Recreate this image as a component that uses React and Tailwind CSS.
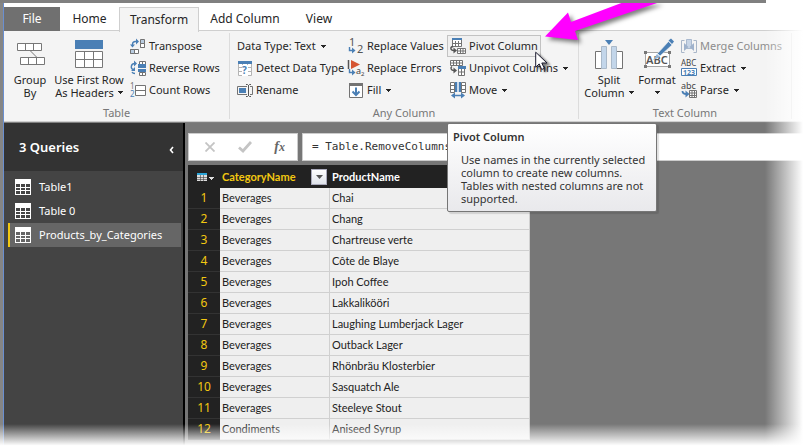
import React from 'react';

const Caret = ({ className = '' }) => (
  <svg aria-hidden="true" viewBox="0 0 5 3" className={`h-[3px] w-[5px] shrink-0 ${className}`} fill="currentColor" shapeRendering="crispEdges">
    <path d="M0 0h5v1H4v1H3v1H2V2H1V1H0z" />
  </svg>
);

const Icon = ({ children, className = 'h-4 w-4', box = '0 0 16 16' }) => (
  <svg aria-hidden="true" viewBox={box} className={`shrink-0 overflow-visible ${className}`} fill="none">
    {children}
  </svg>
);

const LargeIcon = ({ children }) => (
  <Icon className="h-[38px] w-10" box="0 0 40 38">{children}</Icon>
);

const BLUE = '#4a7fb5';
const GREY = '#737373';
const FACE = '"Noto Sans", sans-serif';

const GroupByIcon = () => (
  <LargeIcon>
    <g stroke="#777" fill="#fff">
      <path d="M7.500 8.500h24v7h-24zM15.500 8.500v7M23.500 8.500v7M10.500 22.500h24v7h-24zM18.500 22.500v7M26.500 22.500v7" />
      <path d="M20.500 16l6 6" fill="none" />
    </g>
  </LargeIcon>
);

const HeadersIcon = () => (
  <LargeIcon>
    <path d="M6 5h28v9H6z" fill={BLUE} />
    <path d="M6.500 16.500h27v16h-27zM6.500 24.500h27M15.500 16.500v16M24.500 16.500v16" fill="#fff" stroke="#777" />
  </LargeIcon>
);

const TransposeIcon = () => (
  <Icon>
    <path d="M2.500 8V6.500a3 3 0 0 1 3-3H7" stroke={BLUE} strokeWidth="1.400" />
    <path d="M0 6.500h5L2.500 9.500zM6 .5v6l3-3z" fill={BLUE} />
    <path d="M10.500 1.500h4v8h-4z" fill="#b9cce0" stroke={GREY} />
    <path d="M10.500 5.500h4v4h-4z" fill="#fff" stroke={GREY} />
    <path d="M.5 11.500h8v4h-8z" fill="#fff" stroke={GREY} />
    <path d="M.5 11.500h4v4h-4z" fill="#b9cce0" stroke={GREY} />
  </Icon>
);

const ReverseIcon = () => (
  <Icon>
    <path d="M5 3.500C.5 3.500.5 8.500 3 9.500M2 12c.500 1 1.500 1.500 3 1.500" stroke={BLUE} strokeWidth="1.400" />
    <path d="M4 .5v6l3-3zM1 11l4-4v4z" fill={BLUE} />
    <path d="M9.500 1.500h6v3h-6zM12.500 1.500v3M9.500 12.500h6v3h-6zM12.500 12.500v3" fill="#fff" stroke={GREY} />
    <path d="M8 4h8v4H8zM8 9h8v3H8z" fill={BLUE} />
  </Icon>
);

const CountIcon = () => (
  <Icon>
    <text x="0" y="7" fontSize="8" fontFamily={FACE} fill={GREY}>1</text>
    <text x="0" y="15" fontSize="8" fontFamily={FACE} fill={BLUE}>2</text>
    <path d="M5.500 3.500h10v10h-10zM5.500 8.500h10" fill="#fff" stroke={GREY} />
  </Icon>
);

const DetectIcon = () => (
  <Icon>
    <path d="M1.500 3.500h13v12h-13zM1.500 7.500h13M1.500 11.500h13M5.500 3.500v12M10.500 3.500v12" fill="#fff" stroke="#b4b4b4" />
    <path d="M5 5h6v11H5z" fill="#fff" />
    <path d="M1 1h14v3H1z" fill={BLUE} />
    <text x="5" y="14" fontSize="10" fontWeight="700" fontFamily={FACE} fill={BLUE}>?</text>
  </Icon>
);

const RenameIcon = () => (
  <Icon>
    <path d="M10 4.500H.5v8H10M13 4.500h2.500v8H13" stroke={GREY} />
    <path d="M2 6h7v5H2z" fill={BLUE} />
    <path d="M9 2.500h1.500l1 1 1-1H14M11.500 3v11M9 14.500h1.500l1-1 1 1H14" stroke="#555" />
  </Icon>
);

const ReplaceArrow = () => (
  <g>
    <path d="M1.500 9v3.500H5" stroke={BLUE} strokeWidth="1.400" />
    <path d="M4 9.500v6l3.500-3z" fill={BLUE} />
  </g>
);

const ReplaceValuesIcon = () => (
  <Icon>
    <text x="1" y="8" fontSize="11" fontFamily={FACE} fill="#555">1</text>
    <text x="9" y="15" fontSize="11" fontFamily={FACE} fill="#555">2</text>
    <ReplaceArrow />
  </Icon>
);

const ReplaceErrorsIcon = () => (
  <Icon>
    <path d="M.5 0v9" stroke="#555" strokeWidth="1.500" />
    <path d="M3 0l9 4.500L3 9z" fill="#d65532" />
    <ReplaceArrow />
    <text x="8" y="14" fontSize="9" fontFamily={FACE} fill="#444">a</text>
    <text x="13" y="16" fontSize="6" fontFamily={FACE} fill="#444">2</text>
  </Icon>
);

const FillIcon = () => (
  <Icon>
    <path d="M1.500 1.500h13v14h-13z" fill="#fff" stroke={GREY} />
    <path d="M1 1h14v3H1z" fill={GREY} />
    <path d="M8 5.500V13M4.500 9.500L8 13l3.500-3.500" stroke={BLUE} strokeWidth="2" />
  </Icon>
);

const PivotIcon = () => (
  <Icon>
    <path d="M2.500 1.500h9v7h-9zM2.500 5.500h9M5.500 3v5.500M8.500 3v5.500" fill="#fff" stroke={GREY} />
    <path d="M2 0h10v2H2z" fill={BLUE} />
    <path d="M3 8.500C0 9 0 12.500 4 12.500" stroke="#555" strokeWidth="1.400" />
    <path d="M3.500 9.500v6l3.500-3z" fill="#555" />
    <path d="M7.500 10.500h8v5h-8zM10.500 10.500v5M7.500 13h8M13 10.500v5" fill="#fff" stroke={GREY} />
  </Icon>
);

const UnpivotIcon = () => (
  <Icon>
    <path d="M.5.5h12v5H.5zM.5 3h12M3.500.5v5M6.500.5v5M9.500.5v5" fill="#fff" stroke={GREY} />
    <path d="M2 6.500C0 8 1 10.500 4 10.500" stroke="#555" strokeWidth="1.400" />
    <path d="M3.500 7.500v6l3.500-3z" fill="#555" />
    <path d="M8.500 7.500h6v8h-6zM8.500 12h6M11.500 8.500v7" fill="#fff" stroke={GREY} />
    <path d="M8 6h8v3H8z" fill={BLUE} />
  </Icon>
);

const MoveIcon = () => (
  <Icon>
    <path d="M.5.5h4v10h-4zM.5 3.500h4M.5 7.500h4M11.500.5h4v10h-4zM11.500 3.500h4M11.500 7.500h4" fill="#fff" stroke={GREY} />
    <path d="M5 0h2v10H5zM9 0h2v10H9z" fill={BLUE} />
    <path d="M7 0h2v10H7z" fill="#c9daeb" />
    <path d="M3 13.500h10" stroke={BLUE} strokeWidth="1.500" />
    <path d="M1 13.500l4-3v6zM15 13.500l-4-3v6z" fill={BLUE} />
  </Icon>
);

const SplitIcon = () => (
  <LargeIcon>
    <path d="M16 5h8l-4 5z" fill={BLUE} />
    <path d="M6.500 16.500h6v17h-6zM27.500 16.500h6v17h-6z" fill="#fff" stroke={GREY} />
    <path d="M12.500 11.500h5v22h-5zM22.500 11.500h5v22h-5z" fill="#c3d6ea" stroke="#aab9c9" />
  </LargeIcon>
);

const FormatIcon = () => (
  <LargeIcon>
    <path d="M8.500 17.500h24v14h-24z" fill="#fff" stroke="#a5a5a5" />
    <text x="9" y="29" fontSize="11" fontWeight="600" fontFamily={FACE} fill="#555">ABC</text>
    <path d="M7 16h3v3H7zM31 16h3v3h-3zM7 30h3v3H7zM31 30h3v3h-3z" fill="#777" />
    <path d="M20.500 18.500l11-12 3.500 3.500-12 11z" fill={BLUE} stroke="#f4f4f4" strokeWidth=".6" />
    <path d="M31.500 5.500l2.500-2 3 3-2 2.500z" fill={BLUE} />
    <path d="M20 19l3 3-7 3z" fill="#94b5d6" />
  </LargeIcon>
);

const MergeIcon = () => (
  <Icon>
    <path d="M3.500 2.500h-3v12h3M12.500 2.500h3v12h-3" stroke="#a9b6c8" />
    <path d="M5.500 1.500h5v9h-5z" fill="#c8d5e6" stroke="#a9b9cf" />
    <path d="M3 5l4.500 4L3 13zM13 5L8.500 9l4.500 4z" fill="#9fb2cc" />
  </Icon>
);

const ExtractIcon = () => (
  <Icon>
    <text x="0" y="6" fontSize="8" fontFamily={FACE} fill="#444">ABC</text>
    <path d="M.5 8.500h15v7H.5z" fill="#fff" stroke={BLUE} />
    <text x="2" y="15" fontSize="7" fontWeight="700" fontFamily={FACE} fill={BLUE}>123</text>
  </Icon>
);

const ParseIcon = () => (
  <Icon>
    <text x="0" y="7" fontSize="9" fontFamily={FACE} fill="#444">abc</text>
    <path d="M1.500 9c0 2 1 3 4 3" stroke={BLUE} strokeWidth="1.800" />
    <path d="M4.500 8.500v7l4-3.500z" fill={BLUE} />
    <path d="M8.500 8.500h7v7h-7zM8.500 11h7M8.500 13.500h7M11 8.500v7M13.500 8.500v7" fill="#fff" stroke={GREY} />
  </Icon>
);

const TableGlyph = () => (
  <Icon>
    <path fillRule="evenodd" fill="#fff" d="M0 0h16v16H0zM1 5v3h4V5zM6 5v3h4V5zM11 5v3h4V5zM1 9v2h4V9zM6 9v2h4V9zM11 9v2h4V9zM1 12v3h4v-3zM6 12v3h4v-3zM11 12v3h4v-3z" />
  </Icon>
);

function SmallButton({ icon: Glyph, label, menu, disabled, active }) {
  return (
    <button
      type="button"
      disabled={disabled}
      aria-haspopup={menu ? 'menu' : undefined}
      className={`flex h-[22px] items-center gap-[3px] whitespace-nowrap border px-[2px] ${active ? 'border-[#c2c2c2] bg-[#f0f0f0]' : 'border-transparent'} ${disabled ? 'text-[#8c8c8c]' : 'text-[#262626]'}`}
    >
      {Glyph && <Glyph />}
      <span>{label}</span>
      {menu && <Caret className="ml-[2px]" />}
    </button>
  );
}

function LargeButton({ icon: Glyph, lines, menu, className }) {
  return (
    <button type="button" aria-haspopup={menu ? 'menu' : undefined} className={`flex flex-col items-center leading-[13px] text-[#262626] ${className}`}>
      <Glyph />
      <span>{lines[0]}</span>
      <span className="flex min-h-[13px] items-center gap-1">
        {lines[1]}
        {menu && <Caret />}
      </span>
    </button>
  );
}

const Stack = ({ children, className = '' }) => (
  <div className={`flex flex-col items-start ${className}`}>{children}</div>
);

function Group({ title, className, children }) {
  return (
    <section aria-label={title} className={`my-[2px] flex shrink-0 flex-col border-r border-[#dcdcdc] pt-[2px] ${className}`}>
      <div className="flex h-[71px] shrink-0">{children}</div>
      <div className="text-center leading-[13px] text-[#777]">{title}</div>
    </section>
  );
}

const tabs = [
  { name: 'File', style: 'w-14 bg-[#707070] text-white' },
  { name: 'Home', style: 'w-[59px]' },
  { name: 'Transform', style: 'w-20 -mb-px border border-b-0 border-[#cfcfcf] bg-[#f4f4f4]' },
  { name: 'Add Column', style: 'w-[92px]' },
  { name: 'View', style: 'w-[56px]' },
];

const queries = ['Table1', 'Table 0', 'Products_by_Categories'];

const rows = [
  ['Beverages', 'Chai'],
  ['Beverages', 'Chang'],
  ['Beverages', 'Chartreuse verte'],
  ['Beverages', 'Côte de Blaye'],
  ['Beverages', 'Ipoh Coffee'],
  ['Beverages', 'Lakkalikööri'],
  ['Beverages', 'Laughing Lumberjack Lager'],
  ['Beverages', 'Outback Lager'],
  ['Beverages', 'Rhönbräu Klosterbier'],
  ['Beverages', 'Sasquatch Ale'],
  ['Beverages', 'Steeleye Stout'],
  ['Condiments', 'Aniseed Syrup'],
];

function Ribbon() {
  return (
    <div className="flex h-[92px] overflow-hidden border-y border-[#cfcfcf] bg-[#f4f4f4]">
      <Group title="Table" className="w-[226px]">
        <LargeButton icon={GroupByIcon} lines={['Group', 'By']} className="w-[52px]" />
        <LargeButton icon={HeadersIcon} lines={['Use First Row', 'As Headers']} menu className="w-[66px] whitespace-nowrap" />
        <Stack className="ml-[5px]">
          <SmallButton icon={TransposeIcon} label="Transpose" />
          <SmallButton icon={ReverseIcon} label="Reverse Rows" />
          <SmallButton icon={CountIcon} label="Count Rows" />
        </Stack>
      </Group>
      <Group title="Any Column" className="w-[349px]">
        <Stack className="ml-1 w-[111px]">
          <SmallButton label="Data Type: Text" menu />
          <SmallButton icon={DetectIcon} label="Detect Data Type" />
          <SmallButton icon={RenameIcon} label="Rename" />
        </Stack>
        <Stack className="w-[102px]">
          <SmallButton icon={ReplaceValuesIcon} label="Replace Values" />
          <SmallButton icon={ReplaceErrorsIcon} label="Replace Errors" />
          <SmallButton icon={FillIcon} label="Fill" menu />
        </Stack>
        <Stack>
          <SmallButton icon={PivotIcon} label="Pivot Column" active />
          <SmallButton icon={UnpivotIcon} label="Unpivot Columns" menu />
          <SmallButton icon={MoveIcon} label="Move" menu />
        </Stack>
      </Group>
      <Group title="Text Column" className="w-[213px]">
        <LargeButton icon={SplitIcon} lines={['Split', 'Column']} menu className="w-[60px]" />
        <LargeButton icon={FormatIcon} lines={['Format', '']} menu className="w-[36px]" />
        <Stack className="ml-[3px]">
          <SmallButton icon={MergeIcon} label="Merge Columns" disabled />
          <SmallButton icon={ExtractIcon} label="Extract" menu />
          <SmallButton icon={ParseIcon} label="Parse" menu />
        </Stack>
      </Group>
    </div>
  );
}

function Sidebar() {
  return (
    <nav aria-label="Queries" className="flex w-[181px] shrink-0 flex-col border-r-2 border-black bg-[#444] text-white">
      <div className="flex h-12 items-center justify-between bg-[#333] pl-[15px] pr-[9px] pt-[2px]">
        <h2 className="text-[13px] font-semibold">3 Queries</h2>
        <button type="button" aria-label="Collapse queries" className="mt-1">
          <svg aria-hidden="true" viewBox="0 0 5 8" className="h-2 w-[5px]" fill="none" stroke="#fff" strokeWidth="1.600"><path d="M4 1L1.500 4 4 7" /></svg>
        </button>
      </div>
      <ul className="mt-1 pl-1 pr-[2px]">
        {queries.map((q, i) => (
          <li key={q}>
            <button type="button" className={`flex h-6 w-full items-center gap-2 border-l-2 pl-[5px] text-left ${i === 2 ? 'border-[#f2c811] bg-[#666]' : 'border-transparent'}`}>
              <TableGlyph />
              {q}
            </button>
          </li>
        ))}
      </ul>
    </nav>
  );
}

function FormulaBar() {
  return (
    <div className="flex h-7 gap-1">
      <div className="flex w-[110px] shrink-0 items-center justify-between border border-[#ccc] bg-white pl-4 pr-3">
        <button type="button" aria-label="Cancel">
          <svg aria-hidden="true" viewBox="0 0 10 10" className="h-[10px] w-[10px]" stroke="#c4c4c4" strokeWidth="1.800"><path d="M.5 0.500l9 9M9.500.5l-9 9" /></svg>
        </button>
        <button type="button" aria-label="Accept">
          <svg aria-hidden="true" viewBox="0 0 14 12" className="h-3 w-[14px]" fill="none" stroke="#c4c4c4" strokeWidth="2.800"><path d="M1 6.500l4 3.500L13 1" /></svg>
        </button>
        <button type="button" aria-label="Insert function" className="font-['Liberation_Serif',serif] text-sm font-semibold italic leading-4 text-[#666]">
          f<span className="text-xs">x</span>
        </button>
      </div>
      <input
        type="text"
        aria-label="Formula"
        defaultValue="= Table.RemoveColumns"
        className="min-w-0 flex-1 border border-r-0 border-[#ccc] bg-white pl-[9px] font-['DejaVu_Sans_Mono',monospace] text-[11px] text-[#333] outline-none"
      />
    </div>
  );
}

function DataTable() {
  return (
    <table className="mt-1 w-[342px] table-fixed border-separate border-spacing-0 text-left font-['Lato',sans-serif] text-[11px] leading-5">
      <colgroup>
        <col className="w-8" />
        <col className="w-[110px]" />
        <col className="w-[200px]" />
      </colgroup>
      <thead className="bg-[#222]">
        <tr className="h-[23px]">
          <th className="p-0">
            <button type="button" aria-label="Table options" className="flex w-full items-center gap-[2px] pl-[9px] text-[#ddd]">
              <svg aria-hidden="true" viewBox="0 0 10 8" className="h-2 w-[10px]" shapeRendering="crispEdges">
                <path d="M0 0h10v8H0z" fill="#ddd" />
                <path d="M0 0h10v2H0z" fill="#29a3d6" />
                <path d="M3 2v6M6 2v6M0 4h10M0 6h10" stroke="#444" strokeWidth=".6" />
              </svg>
              <Caret className="mt-1" />
            </button>
          </th>
          <th scope="col" className="p-0 pl-[2px]">
            <span className="flex items-center justify-between pr-[3px] text-[#f2c811]">
              CategoryName
              <button type="button" aria-label="Filter CategoryName" className="flex h-4 w-4 items-center justify-center border border-[#aab] bg-gradient-to-b from-white to-[#dfe3ea] text-[#555]">
                <svg aria-hidden="true" viewBox="0 0 7 4" className="h-1 w-[7px]" fill="currentColor"><path d="M0 0h7L3.500 4z" /></svg>
              </button>
            </span>
          </th>
          <th scope="col" className="p-0 pl-[2px] text-white">ProductName</th>
        </tr>
      </thead>
      <tbody>
        {rows.map(([category, product], i) => (
          <tr key={product} className="h-[21px]">
            <th scope="row" className="border-b border-[#333] bg-[#222] p-0 text-center font-['Noto_Sans',sans-serif] text-xs leading-5 font-normal text-[#f2c811]">{i + 1}</th>
            <td className="border-b border-r border-[#d0d0d0] bg-[#efefef] p-0 pl-[2px] text-[#222]">{category}</td>
            <td className="border-b border-r border-[#d0d0d0] bg-[#efefef] p-0 pl-[2px] text-[#222]">{product}</td>
          </tr>
        ))}
      </tbody>
    </table>
  );
}

export default function App() {
  return (
    <div className="relative flex h-screen flex-col overflow-hidden bg-white font-['Noto_Sans',sans-serif] text-[11px] text-[#262626]">
      <div className="z-20 mr-[37px] h-[3px] shrink-0 bg-[#808080]" />
      <div className="flex min-h-0 flex-1">
        <div className="w-1 shrink-0 border-r border-[#6a8fd0] bg-[#858585]" />
        <div className="flex min-w-0 flex-1 flex-col">
          <div role="tablist" className="z-10 flex h-7 shrink-0 items-stretch pt-1 text-xs">
            {tabs.map((t) => (
              <button key={t.name} type="button" role="tab" aria-selected={t.name === 'Transform'} className={`whitespace-nowrap ${t.style}`}>
                {t.name}
              </button>
            ))}
          </div>
          <div className="-mt-px shrink-0">
            <Ribbon />
          </div>
          <div className="flex min-h-0 flex-1 border-t border-[#808080]">
            <Sidebar />
            <main className="min-w-0 flex-1 overflow-hidden bg-[#777] pl-[3px] pt-[10px]">
              <FormulaBar />
              <DataTable />
            </main>
          </div>
        </div>
      </div>

      <div role="tooltip" className="absolute left-[447px] top-[123px] w-[210px] rounded-[2px] border border-[#767676] bg-gradient-to-b from-white to-[#e9e9ec] pb-[6px] pl-[5px] pt-[5px] text-[#333] shadow-[2px_2px_1px_rgba(0,0,0,0.12)]">
        <h3 className="font-semibold leading-4">Pivot Column</h3>
        <p className="mt-2 whitespace-nowrap pl-2 leading-[13px]">
          Use names in the currently selected
          <br />
          column to create new columns.
          <br />
          Tables with nested columns are not
          <br />
          supported.
        </p>
      </div>

      <div className="pointer-events-none absolute inset-y-0 right-0 w-[38px] bg-gradient-to-r from-white/0 to-white" />
      <div className="pointer-events-none absolute inset-x-0 bottom-0 h-6 bg-gradient-to-b from-white/0 to-white to-90%" />

      <svg aria-hidden="true" viewBox="0 0 130 50" className="pointer-events-none absolute left-[540px] top-0 z-10 h-[50px] w-[130px] drop-shadow-[3px_3px_2px_rgba(0,0,0,0.5)]">
        <path d="M5 36.500L28 12.500l3 9.500L84 2l36 0L35 31l3 9z" fill="#ff00ff" />
      </svg>
      <svg aria-hidden="true" viewBox="0 0 14 20" className="pointer-events-none absolute left-[535px] top-[51px] h-5 w-[14px] drop-shadow-[3px_2px_1px_rgba(0,0,0,0.5)]">
        <path d="M.7 1.200v15l3.500-3.300 2.500 5.600 2.600-1.200-2.500-5.300H12z" fill="#fff" stroke="#1c1c30" />
      </svg>
    </div>
  );
}
